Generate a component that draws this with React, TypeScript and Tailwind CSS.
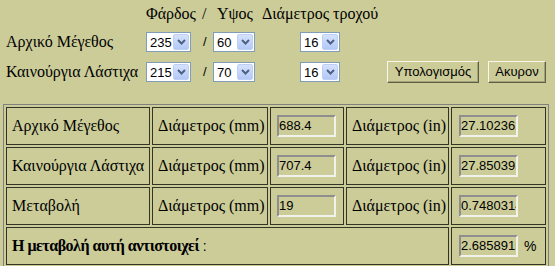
import React from "react";

const serif = "font-['Liberation_Serif','Times_New_Roman',serif]";
const sans = "font-['Liberation_Sans',Arial,sans-serif]";

function Sel({ v, w }: { v: string; w: string }) {
  return (
    <div
      className={`${w} h-[20px] flex items-center bg-white border border-[#7f9db9] pl-[3px] pr-[1px] text-[13px] text-black ${sans}`}
    >
      <span className="flex-1 leading-none">{v}</span>
      <span className="w-[16px] h-[16px] rounded-[2px] bg-gradient-to-b from-[#d6e2fd] to-[#b3c8f6] border border-[#bcd0f7] flex items-center justify-center">
        <svg width="9" height="6" viewBox="0 0 9 6">
          <path d="M1 1 L4.5 4.5 L8 1" stroke="#4d6185" strokeWidth="2" fill="none" />
        </svg>
      </span>
    </div>
  );
}

function Btn({ label, w }: { label: string; w: string }) {
  return (
    <div
      className={`${w} h-[22px] flex items-center justify-center bg-[#cccc99] border border-t-[#f7f7ea] border-l-[#f7f7ea] border-b-[#5e5e46] border-r-[#5e5e46] shadow-[inset_-1px_-1px_0_#a3a37a] text-[13px] text-black ${sans}`}
    >
      {label}
    </div>
  );
}

function Field({ v }: { v: string }) {
  return (
    <div
      className={`w-[59px] h-[22px] flex items-center overflow-hidden whitespace-nowrap bg-[#cccc99] border-2 border-t-[#8e8e8e] border-l-[#8e8e8e] border-b-[#f2f2ec] border-r-[#f2f2ec] pl-0 text-[13px] text-black ${sans}`}
    >
      {v}
    </div>
  );
}

function Cell({ children, cls = "" }: { children: React.ReactNode; cls?: string }) {
  return (
    <div className={`h-[38px] border border-[#333326] flex items-center ${cls}`}>{children}</div>
  );
}

export default function App() {
  const rows = [
    { label: "Αρχικό Μέγεθος", mm: "688.4", inch: "27.102362" },
    { label: "Καινούργια Λάστιχα", mm: "707.4", inch: "27.850393" },
    { label: "Μεταβολή", mm: "19", inch: "0.7480314" },
  ];
  return (
    <div className={`w-[555px] h-[266px] overflow-hidden bg-[#cccc99] text-black ${serif} text-[16px]`}>
      <div className="grid grid-cols-[146px_53px_14px_48px_125px_1fr] h-[30px] pt-[5px] leading-[18px]">
        <div />
        <div>Φάρδος</div>
        <div className="pl-[3px]">/</div>
        <div className="pl-[4px]">Υψος</div>
        <div className="pl-[1px]">Διάμετρος τροχού</div>
        <div />
      </div>
      <div className="grid grid-cols-[146px_53px_14px_48px_125px_1fr] h-[22px] items-center">
        <div className="pl-[6px]">Αρχικό Μέγεθος</div>
        <Sel v="235" w="w-[45px]" />
        <div className={`pl-[4px] ${sans} text-[13px]`}>/</div>
        <Sel v="60" w="w-[42px]" />
        <div className="pl-[39px]">
          <Sel v="16" w="w-[40px]" />
        </div>
        <div />
      </div>
      <div className="grid grid-cols-[146px_53px_14px_48px_125px_1fr] h-[22px] items-center mt-[8px]">
        <div className="pl-[6px] whitespace-nowrap">Καινούργια Λάστιχα</div>
        <Sel v="215" w="w-[45px]" />
        <div className={`pl-[4px] ${sans} text-[13px]`}>/</div>
        <Sel v="70" w="w-[42px]" />
        <div className="pl-[39px]">
          <Sel v="16" w="w-[40px]" />
        </div>
        <div className="flex gap-[9px] pl-[1px]">
          <Btn label="Υπολογισμός" w="w-[92px]" />
          <Btn label="Ακυρον" w="w-[58px]" />
        </div>
      </div>
      <div className="mt-[22px] ml-[3px] w-[546px] border border-[#808080] p-[2px] grid grid-cols-[144px_116px_74px_103px_95px] gap-[2px]">
        {rows.map((r) => (
          <React.Fragment key={r.label}>
            <Cell cls="pl-[5px] whitespace-nowrap">{r.label}</Cell>
            <Cell cls="pl-[5px] whitespace-nowrap">Διάμετρος (mm)</Cell>
            <Cell cls="pl-[6px]">
              <Field v={r.mm} />
            </Cell>
            <Cell cls="pl-[5px] whitespace-nowrap">Διάμετρος (in)</Cell>
            <Cell cls="pl-[7px]">
              <Field v={r.inch} />
            </Cell>
          </React.Fragment>
        ))}
        <Cell cls="col-span-4 pl-[5px] whitespace-nowrap">
          <b className="text-[16px] tracking-[-0.5px]">Η μεταβολή αυτή αντιστοιχεί</b>
          <span className={`${sans} text-[14px]`}>&nbsp;:</span>
        </Cell>
        <Cell cls="pl-[7px]">
          <Field v="2.6858915" />
          <span className={`ml-[6px] ${sans} text-[14px]`}>%</span>
        </Cell>
      </div>
    </div>
  );
}
